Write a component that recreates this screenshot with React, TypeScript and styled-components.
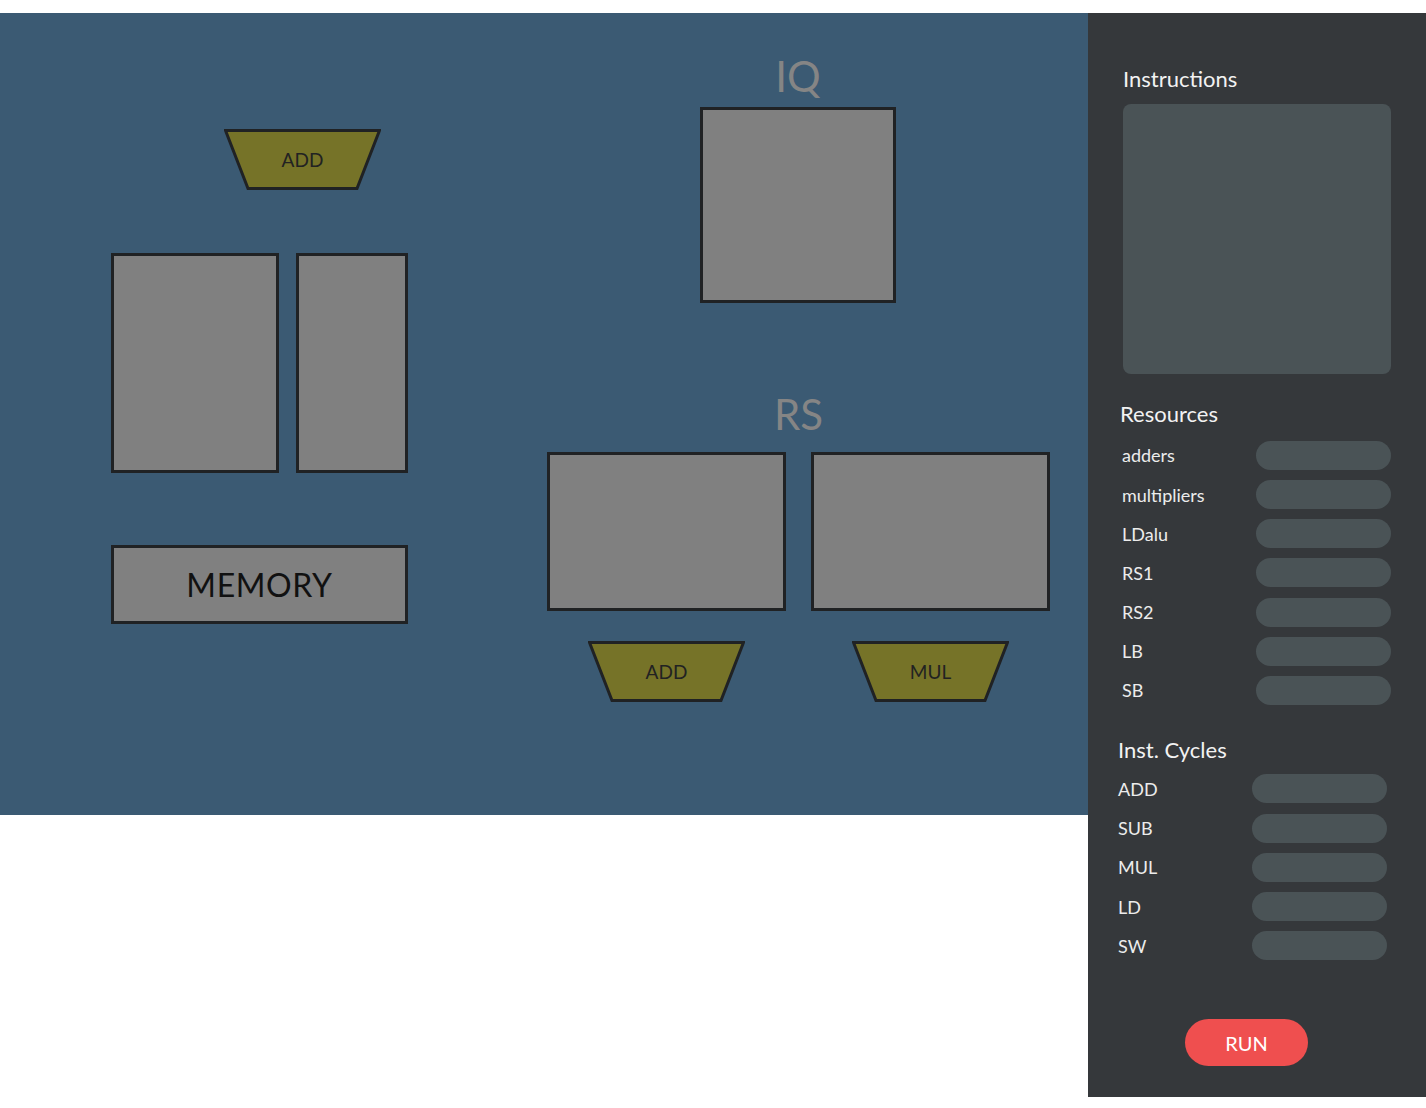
import React from "react";
import styled, { createGlobalStyle } from "styled-components";

const GlobalStyle = createGlobalStyle`
  html, body { margin: 0; padding: 0; background: #ffffff; }
  body { font-family: Lato, "Open Sans", sans-serif; }
  * { box-sizing: border-box; }
`;

const Page = styled.div`
  display: flex;
  align-items: flex-start;
  padding-top: 13px;
  width: 1426px;
`;

const Canvas = styled.div`
  position: relative;
  flex-shrink: 0;
  width: 1088px;
  height: 802px;
  background: #3b5a73;
`;

const Node = styled.div<{ $x: number; $y: number }>`
  position: absolute;
  left: ${(p) => p.$x}px;
  top: ${(p) => p.$y}px;
  display: flex;
  flex-direction: column;
`;

const Block = styled.div<{ $w: number; $h: number }>`
  width: ${(p) => p.$w}px;
  height: ${(p) => p.$h}px;
  background: #808080;
  border: 3px solid #202224;
  display: flex;
  align-items: center;
  justify-content: center;
  font-size: 32px;
  color: #111111;
  letter-spacing: 0.6px;
`;

const BlockRow = styled.div<{ $gap: number }>`
  display: flex;
  gap: ${(p) => p.$gap}px;
`;

const UnitWrap = styled.div<{ $offset?: number }>`
  position: relative;
  width: 157px;
  height: 61px;
  margin-left: ${(p) => p.$offset ?? 0}px;
  display: flex;
  align-items: center;
  justify-content: center;
`;

const UnitShape = styled.svg`
  position: absolute;
  inset: 0;
`;

const UnitLabel = styled.span`
  position: relative;
  font-size: 19px;
  color: #222222;
`;

const SectionLabel = styled.div`
  font-size: 42px;
  line-height: 42px;
  color: #858585;
  text-align: center;
`;

const Column = styled.div<{ $gap: number }>`
  display: flex;
  flex-direction: column;
  align-items: center;
  gap: ${(p) => p.$gap}px;
`;

const Unit: React.FC<{ label: string; offset?: number }> = ({ label, offset }) => (
  <UnitWrap $offset={offset}>
    <UnitShape width="157" height="61" viewBox="0 0 157 61">
      <polygon
        points="1.5,1.5 155.5,1.5 133,59.5 24,59.5"
        fill="#767328"
        stroke="#202224"
        strokeWidth="3"
        strokeLinejoin="miter"
      />
    </UnitShape>
    <UnitLabel>{label}</UnitLabel>
  </UnitWrap>
);

const Sidebar = styled.aside`
  flex-shrink: 0;
  width: 338px;
  height: 1084px;
  background: #35383b;
  display: flex;
  flex-direction: column;
  align-items: flex-start;
`;

const Heading = styled.h2<{ $top: number; $indent: number }>`
  margin: ${(p) => p.$top}px 0 0 ${(p) => p.$indent}px;
  font-size: 22px;
  font-weight: 400;
  line-height: 26.4px;
  color: #f2f2f2;
`;

const InstructionBox = styled.textarea`
  margin: 12px 0 0 35px;
  width: 268px;
  height: 270px;
  border: none;
  border-radius: 8px;
  background: #4a5356;
  resize: none;
  outline: none;
  color: #eee;
  font-family: inherit;
`;

const FieldList = styled.div<{ $top: number; $indent: number; $gap: number }>`
  margin: ${(p) => p.$top}px 0 0 ${(p) => p.$indent}px;
  display: flex;
  flex-direction: column;
  gap: ${(p) => p.$gap}px;
`;

const FieldRow = styled.label`
  display: grid;
  grid-template-columns: 134px 135px;
  align-items: center;
  height: 29px;
`;

const FieldName = styled.span`
  font-size: 18px;
  line-height: 20px;
  color: #ececec;
`;

const FieldInput = styled.input`
  width: 135px;
  height: 29px;
  border: none;
  border-radius: 14.5px;
  background: #4a5356;
  outline: none;
  color: #eee;
  padding: 0 12px;
  font-family: inherit;
`;

const RunButton = styled.button`
  margin: 59px 0 0 97px;
  width: 123px;
  height: 47px;
  border: none;
  border-radius: 23.5px;
  background: #ef4f4f;
  color: #ffffff;
  font-family: inherit;
  font-size: 20px;
  cursor: pointer;
`;

const resources = ["adders", "multipliers", "LDalu", "RS1", "RS2", "LB", "SB"];
const cycles = ["ADD", "SUB", "MUL", "LD", "SW"];

export default function App() {
  return (
    <>
      <GlobalStyle />
      <Page>
        <Canvas>
          <Node $x={111} $y={116}>
            <Unit label="ADD" offset={113} />
            <BlockRow $gap={17} style={{ marginTop: 63 }}>
              <Block $w={168} $h={220} />
              <Block $w={112} $h={220} />
            </BlockRow>
            <Block $w={297} $h={79} style={{ marginTop: 72 }}>
              MEMORY
            </Block>
          </Node>

          <Node $x={700} $y={42}>
            <Column $gap={10}>
              <SectionLabel>IQ</SectionLabel>
              <Block $w={196} $h={196} />
            </Column>
          </Node>

          <Node $x={547} $y={380}>
            <Column $gap={17}>
              <SectionLabel>RS</SectionLabel>
              <BlockRow $gap={25}>
                <Column $gap={30}>
                  <Block $w={239} $h={159} />
                  <Unit label="ADD" />
                </Column>
                <Column $gap={30}>
                  <Block $w={239} $h={159} />
                  <Unit label="MUL" />
                </Column>
              </BlockRow>
            </Column>
          </Node>
        </Canvas>

        <Sidebar>
          <Heading $top={53} $indent={35}>Instructions</Heading>
          <InstructionBox />

          <Heading $top={27} $indent={32}>Resources</Heading>
          <FieldList $top={13} $indent={34} $gap={10.2}>
            {resources.map((r) => (
              <FieldRow key={r}>
                <FieldName>{r}</FieldName>
                <FieldInput />
              </FieldRow>
            ))}
          </FieldList>

          <Heading $top={32} $indent={30}>Inst. Cycles</Heading>
          <FieldList $top={11} $indent={30} $gap={10.25}>
            {cycles.map((c) => (
              <FieldRow key={c}>
                <FieldName>{c}</FieldName>
                <FieldInput />
              </FieldRow>
            ))}
          </FieldList>

          <RunButton>RUN</RunButton>
        </Sidebar>
      </Page>
    </>
  );
}
